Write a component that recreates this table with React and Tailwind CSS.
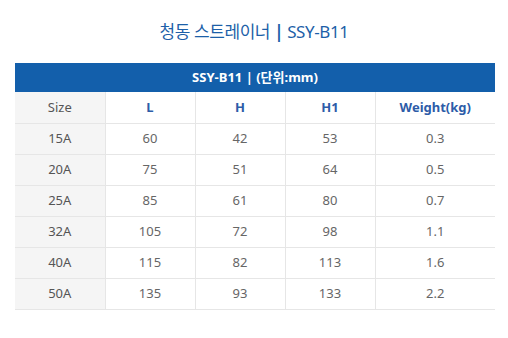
import React from 'react';

const rows = [
  ['15A', '60', '42', '53', '0.3'],
  ['20A', '75', '51', '64', '0.5'],
  ['25A', '85', '61', '80', '0.7'],
  ['32A', '105', '72', '98', '1.1'],
  ['40A', '115', '82', '113', '1.6'],
  ['50A', '135', '93', '133', '2.2'],
];

const font = { fontFamily: '"Noto Sans", "Noto Sans CJK KR", sans-serif' };

const App = () => {
  return (
    <div className="w-[508px] h-[338px] bg-white" style={font}>
      <div className="pt-[19px] text-center text-[17px] leading-[26px] tracking-[-0.4px] text-[#1d5fa8]">
        청동 스트레이너 <span className="font-bold">|</span> SSY-B11
      </div>
      <table className="mt-[18px] ml-[15px] w-[480px] border-collapse table-fixed text-[13px] text-[#666]">
        <colgroup>
          <col className="w-[90px]" />
          <col className="w-[90px]" />
          <col className="w-[90px]" />
          <col className="w-[90px]" />
          <col className="w-[120px]" />
        </colgroup>
        <thead>
          <tr>
            <th colSpan={5} className="h-[29px] bg-[#135fab] text-white text-[13px] font-bold">
              SSY-B11 | (단위:mm)
            </th>
          </tr>
          <tr className="h-[31px] border-b border-[#e6e6e6]">
            <th className="bg-[#f5f5f5] font-normal text-[#555]">Size</th>
            <th className="border-l border-[#e6e6e6] font-bold text-[#2d5ca8]">L</th>
            <th className="border-l border-[#e6e6e6] font-bold text-[#2d5ca8]">H</th>
            <th className="border-l border-[#e6e6e6] font-bold text-[#2d5ca8]">H1</th>
            <th className="border-l border-[#e6e6e6] font-bold text-[#2d5ca8]">Weight(kg)</th>
          </tr>
        </thead>
        <tbody>
          {rows.map((r) => (
            <tr key={r[0]} className="h-[31px] border-b border-[#e6e6e6]">
              <td className="bg-[#f5f5f5] text-center text-[#555]">{r[0]}</td>
              {r.slice(1).map((v, i) => (
                <td key={i} className="border-l border-[#e6e6e6] text-center">{v}</td>
              ))}
            </tr>
          ))}
        </tbody>
      </table>
    </div>
  );
};

export default App;
